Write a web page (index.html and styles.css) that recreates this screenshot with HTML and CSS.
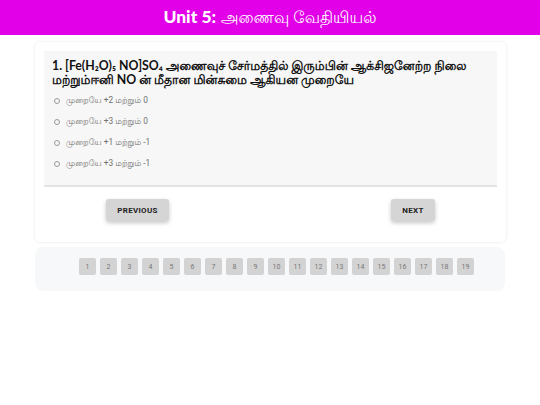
FILE: index.html
```html
<!DOCTYPE html>
<html lang="ta">
<head>
<meta charset="utf-8">
<link rel="stylesheet" href="styles.css">
</head>
<body>
<header class="topbar">
  <h1 class="title"><span class="title-en">Unit 5:</span> <span class="title-ta">அணைவு வேதியியல்</span></h1>
</header>
<main class="page">
  <section class="card">
    <div class="question">
      <p class="qtext">1. [Fe(H₂O)₅ NO]SO₄ அணைவுச் சேர்மத்தில் இரும்பின் ஆக்சிஜனேற்ற நிலை மற்றும்ஈனி NO ன் மீதான மின்சுமை ஆகியன முறையே</p>
      <ul class="options">
        <li class="option"><span class="radio"></span>முறையே +2 மற்றும் 0</li>
        <li class="option"><span class="radio"></span>முறையே +3 மற்றும் 0</li>
        <li class="option"><span class="radio"></span>முறையே +1 மற்றும் -1</li>
        <li class="option"><span class="radio"></span>முறையே +3 மற்றும் -1</li>
      </ul>
    </div>
    <div class="nav">
      <button class="btn btn-prev">PREVIOUS</button>
      <button class="btn btn-next">NEXT</button>
    </div>
  </section>
  <nav class="pager">
    <span class="pg">1</span><span class="pg">2</span><span class="pg">3</span><span class="pg">4</span><span class="pg">5</span><span class="pg">6</span><span class="pg">7</span><span class="pg">8</span><span class="pg">9</span><span class="pg">10</span><span class="pg">11</span><span class="pg">12</span><span class="pg">13</span><span class="pg">14</span><span class="pg">15</span><span class="pg">16</span><span class="pg">17</span><span class="pg">18</span><span class="pg">19</span>
  </nav>
</main>
</body>
</html>
```
FILE: styles.css
```css
* { box-sizing: border-box; }
body {
  margin: 0;
  background: #ffffff;
  font-family: Lato, "Lohit Tamil", "Noto Sans Tamil", sans-serif;
  color: #222;
}
.topbar {
  height: 35px;
  background: #e200e8;
  display: flex;
  align-items: center;
  justify-content: center;
}
.title {
  margin: 0;
  color: #fff;
  font-size: 17.5px;
  font-weight: 400;
  font-family: Lato, "Lohit Tamil", sans-serif;
}
.title-en { font-weight: 900; }
.title-ta { font-size: 16px; }
.page {
  padding: 7px 34px 0 35px;
}
.card {
  background: #fff;
  border-radius: 5px;
  box-shadow: 0 0 3px rgba(0,0,0,0.1);
  padding: 9px 9px 21px;
}
.question {
  background: #f7f7f7;
  border-bottom: 2px solid #e4e4e4;
  padding: 8px 8px 11px;
}
.qtext {
  margin: 0 0 3px;
  font-size: 12.3px;
  font-weight: 700;
  line-height: 14px;
  color: #111;
}
.options {
  list-style: none;
  margin: 0;
  padding: 0 0 0 2px;
}
.option {
  height: 21px;
  display: flex;
  align-items: center;
  font-size: 8.3px;
  color: #707070;
  font-family: Roboto, "Lohit Tamil", sans-serif;
}
.radio {
  width: 6px;
  height: 6px;
  border: 1px solid #9a9a9a;
  border-radius: 50%;
  margin-right: 6px;
}
.nav {
  display: flex;
  justify-content: space-between;
  padding: 12px 62px 0;
}
.btn {
  height: 22px;
  border: none;
  border-radius: 3px;
  background: #d5d5d5;
  box-shadow: 0 2px 4px rgba(0,0,0,0.22);
  font-family: Roboto, sans-serif;
  font-size: 8px;
  font-weight: 700;
  letter-spacing: 0.3px;
  color: #222;
  padding: 0;
}
.btn-prev { width: 63px; }
.btn-next { width: 44px; }
.pager {
  margin-top: 5px;
  margin-right: 1px;
  height: 44px;
  background: #f7f8fa;
  border-radius: 8px;
  display: flex;
  gap: 4px;
  padding: 11px 0 0 44px;
}
.pg {
  width: 17px;
  height: 17px;
  background: #d3d3d3;
  border-radius: 2px;
  color: #777;
  font-family: Roboto, sans-serif;
  font-size: 7px;
  display: flex;
  align-items: center;
  justify-content: center;
}
```
